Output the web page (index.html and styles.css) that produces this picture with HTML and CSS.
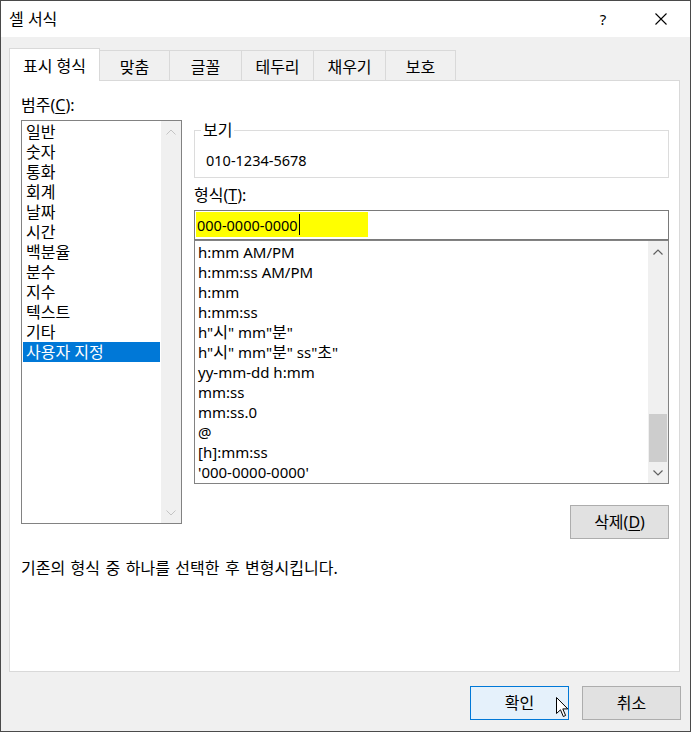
FILE: index.html
```html
<!DOCTYPE html>
<html lang="ko">
<head>
<meta charset="utf-8">
<title>셀 서식</title>
<link rel="stylesheet" href="styles.css">
</head>
<body>
<div class="window">
  <div class="titlebar">
    <span class="title ko">셀 서식</span>
    <span class="help">?</span>
    <span class="close"><svg width="12" height="12" viewBox="0 0 12 12"><path d="M0.5 0.5L11.5 11.5M11.5 0.5L0.5 11.5" stroke="#000" stroke-width="1.1" fill="none"/></svg></span>
  </div>
  <div class="client">
    <div class="tabs">
      <div class="tab active ko">표시 형식</div>
      <div class="tab t2 ko">맞춤</div>
      <div class="tab t3 ko">글꼴</div>
      <div class="tab t4 ko">테두리</div>
      <div class="tab t5 ko">채우기</div>
      <div class="tab t6 ko">보호</div>
    </div>
    <div class="panel">
      <div class="columns">
        <div class="leftcol">
          <div class="label ko">범주(<u>C</u>):</div>
          <div class="listbox cat">
            <ul class="items ko">
              <li>일반</li>
              <li>숫자</li>
              <li>통화</li>
              <li>회계</li>
              <li>날짜</li>
              <li>시간</li>
              <li>백분율</li>
              <li>분수</li>
              <li>지수</li>
              <li>텍스트</li>
              <li>기타</li>
              <li class="sel">사용자 지정</li>
            </ul>
            <div class="vscroll off">
              <div class="arrow"><svg width="10" height="6" viewBox="0 0 10 6"><path d="M0.5 5.5L5 1L9.5 5.5" stroke="currentColor" fill="none"/></svg></div>
              <div class="track"></div>
              <div class="arrow"><svg width="10" height="6" viewBox="0 0 10 6"><path d="M0.5 0.5L5 5L9.5 0.5" stroke="currentColor" fill="none"/></svg></div>
            </div>
          </div>
        </div>
        <div class="rightcol">
          <fieldset class="preview">
            <legend class="ko">보기</legend>
            <div class="sample">010-1234-5678</div>
          </fieldset>
          <div class="label fmtlabel ko">형식(<u>T</u>):</div>
          <div class="input"><span class="hl">000-0000-0000<span class="caret"></span></span></div>
          <div class="listbox fmt">
            <ul class="items">
              <li>h:mm AM/PM</li>
              <li>h:mm:ss AM/PM</li>
              <li>h:mm</li>
              <li>h:mm:ss</li>
              <li>h"<span class="k">시</span>" mm"<span class="k">분</span>"</li>
              <li>h"<span class="k">시</span>" mm"<span class="k">분</span>" ss"<span class="k">초</span>"</li>
              <li>yy-mm-dd h:mm</li>
              <li>mm:ss</li>
              <li>mm:ss.0</li>
              <li>@</li>
              <li>[h]:mm:ss</li>
              <li>'000-0000-0000'</li>
            </ul>
            <div class="vscroll">
              <div class="arrow"><svg width="10" height="6" viewBox="0 0 10 6"><path d="M0.5 5.5L5 1L9.5 5.5" stroke="currentColor" stroke-width="1.2" fill="none"/></svg></div>
              <div class="track"><div class="thumb"></div></div>
              <div class="arrow"><svg width="10" height="6" viewBox="0 0 10 6"><path d="M0.5 0.5L5 5L9.5 0.5" stroke="currentColor" stroke-width="1.2" fill="none"/></svg></div>
            </div>
          </div>
          <div class="btnrow"><button class="btn ko">삭제(<u>D</u>)</button></div>
        </div>
      </div>
      <div class="desc ko">기존의 형식 중 하나를 선택한 후 변형시킵니다.</div>
    </div>
    <div class="footer">
      <button class="btn default ko">확인<svg class="cursor" width="13" height="21" viewBox="0 0 13 21"><path d="M0.5 0.5L0.5 16.5L4.5 12.8L7.3 19.5L9.6 18.5L6.8 11.9L11.8 11.9Z" fill="#fff" stroke="#000" stroke-width="1" stroke-linejoin="miter"/></svg></button>
      <button class="btn ko">취소</button>
    </div>
  </div>
</div>
</body>
</html>
```
FILE: styles.css
```css
* { box-sizing: border-box; }
html, body { margin: 0; padding: 0; background: #fff; }
body {
  font-family: "Noto Sans", "Noto Sans CJK KR", sans-serif;
  font-size: 15px;
  color: #000;
}
.ko, .k { font-size: 16px; }
u { text-underline-offset: 2px; text-decoration-thickness: 1px; }

.window {
  width: 691px;
  height: 732px;
  border: 1px solid #4a4a4a;
  display: flex;
  flex-direction: column;
  background: #f0f0f0;
  overflow: hidden;
}

.titlebar {
  height: 36px;
  flex: none;
  background: #fff;
  display: flex;
  align-items: center;
}
.title { flex: 1; padding-left: 8px; line-height: 20px; }
.help { width: 20px; text-align: center; margin-right: 42px; line-height: 20px; }
.close { width: 12px; height: 12px; margin-right: 23px; display: flex; }

.client { flex: 1; padding: 11px 0 0 8px; }

.tabs { display: flex; align-items: flex-end; height: 32px; }
.tab {
  height: 30px;
  padding-top: 6px;
  line-height: 20px;
  text-align: center;
  white-space: nowrap;
  border-top: 1px solid #d9d9d9;
  border-right: 1px solid #d9d9d9;
  background: #f0f0f0;
}
.tab.active {
  width: 91px;
  height: 33px;
  margin-bottom: -1px;
  padding-top: 7px;
  background: #fff;
  border-left: 1px solid #d9d9d9;
  position: relative;
  z-index: 1;
}
.t2 { width: 70px; }
.t3 { width: 72px; }
.t4 { width: 72px; }
.t5 { width: 72px; }
.t6 { width: 70px; }

.panel {
  width: 671px;
  height: 592px;
  background: #fff;
  border: 1px solid #d9d9d9;
  padding: 14px 9px 0 11px;
}
.columns {
  display: grid;
  grid-template-columns: 161px 475px;
  column-gap: 12px;
  align-items: start;
}
.label { line-height: 20px; white-space: nowrap; }

.listbox {
  display: flex;
  border: 1px solid #828282;
  background: #fff;
}
.listbox.cat { margin-top: 5px; height: 404px; }
.listbox.fmt { height: 244px; }
.items {
  flex: 1;
  list-style: none;
  margin: 0;
  padding: 1px;
  overflow: hidden;
}
.items li { line-height: 20px; height: 20px; padding-left: 3px; white-space: nowrap; }
.fmt .items li { padding-left: 2px; }
.items li.sel { background: #0078d7; color: #fff; }

.vscroll {
  width: 20px;
  flex: none;
  display: flex;
  flex-direction: column;
  background: #f0f0f0;
  color: #606060;
}
.vscroll.off { color: #c4c4c4; }
.arrow { height: 21px; display: flex; align-items: center; justify-content: center; }
.track { flex: 1; display: flex; flex-direction: column; justify-content: flex-end; }
.thumb { height: 48px; background: #cdcdcd; margin: 0 1px; }

.preview {
  margin: 25px 0 0;
  padding: 0 0 7px 6px;
  border: 1px solid #dcdcdc;
  min-width: 0;
}
.preview legend { padding: 0 2px; line-height: 20px; }
.sample { margin: 10px 0 0 5px; line-height: 20px; font-size: 14.5px; }
.fmtlabel { margin-top: 7px; }

.input {
  margin-top: 5px;
  height: 30px;
  border: 1px solid #7a7a7a;
  background: #fff;
  padding: 1px;
  display: flex;
}
.hl {
  width: 172px;
  height: 25px;
  background: #ffff00;
  padding-left: 1px;
  display: flex;
  align-items: center;
  white-space: nowrap;
  font-size: 14.5px;
}
.caret { width: 1px; height: 21px; background: #000; margin-left: 1px; }

.btnrow { display: flex; justify-content: flex-end; margin-top: 21px; }
.btn {
  width: 99px;
  height: 34px;
  border: 1px solid #adadad;
  background: #e1e1e1;
  font-family: inherit;
  color: #000;
  padding: 0;
  line-height: 20px;
  position: relative;
}
.btn.default { border-color: #0078d7; background: #e5f1fb; }
.cursor { position: absolute; left: 85px; top: 10px; }

.desc { margin-top: 19px; line-height: 20px; word-spacing: 1.3px; }

.footer {
  display: flex;
  justify-content: flex-end;
  gap: 13px;
  margin-top: 14px;
  padding-right: 9px;
}
```
